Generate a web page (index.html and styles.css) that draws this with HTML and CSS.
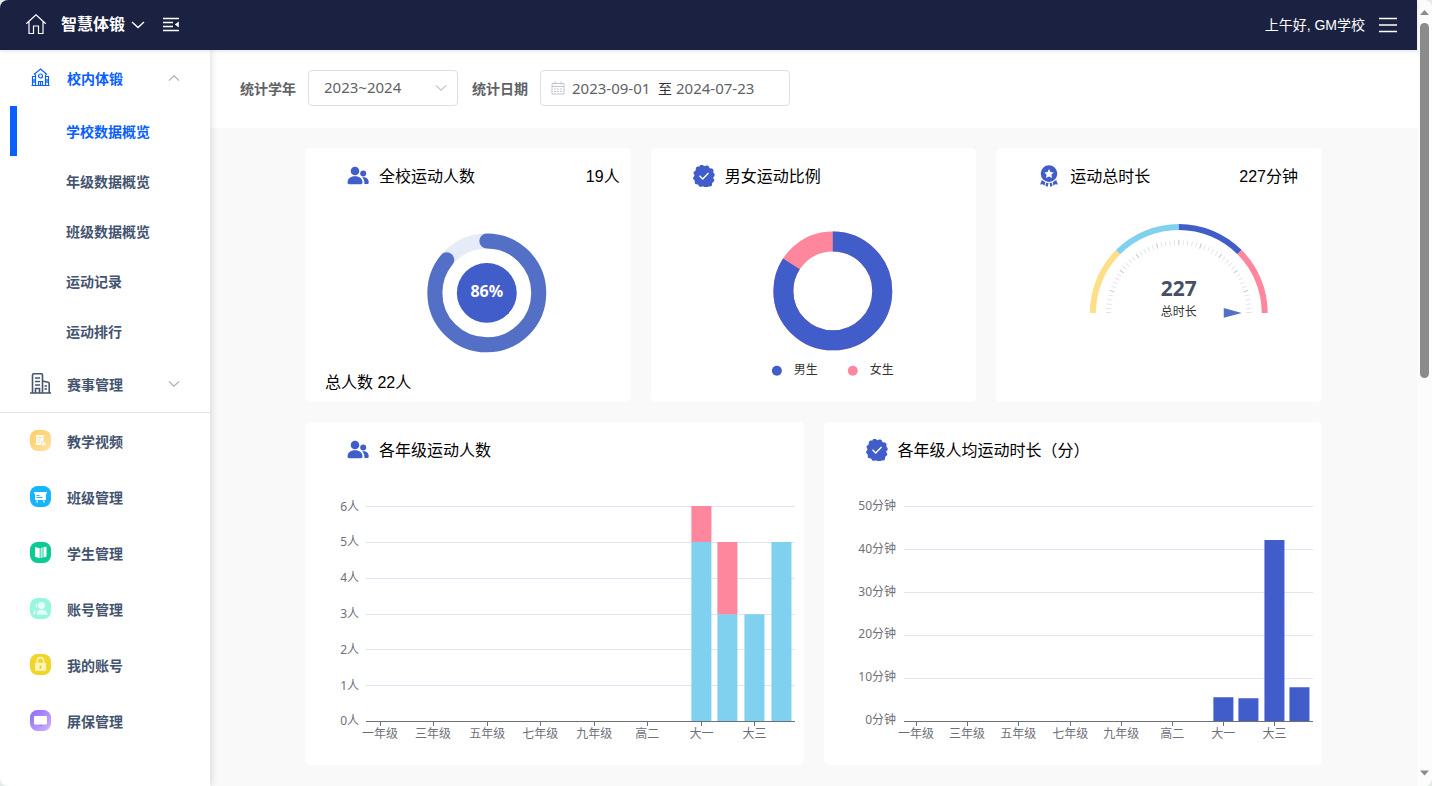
FILE: index.html
```html
<!DOCTYPE html>
<html lang="zh-CN">
<head>
<meta charset="utf-8">
<meta name="viewport" content="width=device-width, initial-scale=1">
<title>智慧体锻</title>
<link rel="stylesheet" href="styles.css">
</head>
<body>
<svg class="defs" aria-hidden="true">
  <symbol id="i-users" viewBox="0 0 22 22">
    <circle cx="8" cy="6" r="4.3"/><path d="M.5 17.5c0-4 3-6.3 7.500-6.300s7.500 2.300 7.500 6.300c0 1.200-.7 1.700-1.700 1.700H2.200c-1 0-1.700-.5-1.700-1.700z"/>
    <circle cx="16.200" cy="8.400" r="3"/><path d="M15.200 12.400c4-.6 6.500 1.600 6.500 4.800 0 1.200-.6 1.900-1.700 1.900h-2.600c.3-2.800-.5-5-2.200-6.700z"/>
  </symbol>
  <symbol id="i-badge" viewBox="0 0 22 22">
    <path d="M11 1.300 13.500.5q1.500-.4 2.300 1l.8 1.700 2.400.4q1.400.4 1.500 1.900l-.2 2 1.200 1.600q.6 1.300-.4 2.300l-1 1.400 1 1.600q.7 1.300-.5 2.300l-1.500 1.200-.1 2q-.3 1.500-1.900 1.600l-1.700-.1-1.200 1.100q-1 1-2.300.3L11 22l-.9-.8-2 .6q-1.400.3-2.200-.9l-.8-1.500-1.900-.1q-1.500-.3-1.500-1.900l.1-1.700-1.300-1.400q-.9-1.200 0-2.300l1.100-1.500-.9-1.800q-.5-1.400.6-2.300l1.400-1 .1-2q.2-1.400 1.600-1.800l2-.1.9-1.400q.8-1.200 2.200-.8z"/>
    <path d="m6.500 10.800 3.200 3.100 5.800-5.800" fill="none" stroke="#fff" stroke-width="1.400"/>
  </symbol>
  <symbol id="i-medal" viewBox="0 0 22 22">
    <path fill-rule="evenodd" d="M11 .3a8.300 8.300 0 1 1 0 16.600A8.300 8.300 0 0 1 11 .3zm0 3.600L9.500 7l-3.200.4 2.300 2.300-.6 3.300 3-1.600 3 1.600-.6-3.300 2.300-2.300-3.200-.4z"/>
    <path d="m3.800 15 3.500 2.300-.7 3.100-2-1.100-2.500.2zM8.300 17.700l2.200.4-.9 3.800-2.300-1.500zM18.200 15l-3.500 2.300.7 3.100 2-1.100 2.500.2zM13.700 17.700l-2.200.4.9 3.800 2.300-1.500z"/>
  </symbol>
  <symbol id="i-down" viewBox="0 0 14 14"><path d="M1 4 7 9.500 13 4" fill="none" stroke="currentColor" stroke-width="1.400"/></symbol>
  <linearGradient id="g-yellow" x1="0" y1="0" x2="1" y2="1"><stop stop-color="#ffcc62"/><stop offset="1" stop-color="#ffe3a6"/></linearGradient>
  <linearGradient id="g-purple" x1="0" y1="0" x2="1" y2="1"><stop stop-color="#8c66fa"/><stop offset="1" stop-color="#d2b5fb"/></linearGradient>
</svg>

<div class="window">
  <div class="app">
    <header class="topbar">
      <a class="home" href="#" aria-label="首页">
        <svg width="22" height="22" viewBox="0 0 22 22" fill="none" stroke="#fff" stroke-width="1.200"><path d="M1.300 9.800 11 .8l9.700 9M4 7.500v12h4.500V12h5v7.500H18v-12"/></svg>
      </a>
      <button class="brand" type="button">智慧体锻<svg class="brand-arrow" width="14" height="14"><use href="#i-down"/></svg></button>
      <button class="fold" type="button" aria-label="收起菜单">
        <svg width="18" height="16" viewBox="0 0 18 16" fill="none" stroke="#fff" stroke-width="1.400"><path d="M1 1.500h16M1 5.500h10M1 9.500h10M1 13.500h16"/><path d="M16.800 4.500v6l-4-3z" fill="#fff" stroke="none"/></svg>
      </button>
      <span class="greeting">上午好, GM学校</span>
      <button class="more" type="button" aria-label="更多">
        <svg width="18" height="16" viewBox="0 0 18 16" stroke="#fff" stroke-width="1.500"><path d="M0 1.500h18M0 8h18M0 14.500h18"/></svg>
      </button>
    </header>

    <div class="body">
      <nav class="sidebar">
        <a class="item open" href="#">
          <svg class="icon" viewBox="0 0 21 21" fill="none" stroke="currentColor" stroke-width="1.200"><path d="M1.500 18.500h18M2.500 18.500V9.500h3M18.500 18.500V9.500h-3M5.500 18.500v-11M15.500 18.500v-11M4 7.500l6.500-5.500L17 7.500M8.500 18.500v-4h4v4M10.500 14.500v4M4 12v4M17 12v4"/><circle cx="10.500" cy="9" r="2"/></svg>
          <span>校内体锻</span><svg class="arrow up" width="12" height="12"><use href="#i-down"/></svg>
        </a>
        <a class="sub active" href="#">学校数据概览</a>
        <a class="sub" href="#">年级数据概览</a>
        <a class="sub" href="#">班级数据概览</a>
        <a class="sub" href="#">运动记录</a>
        <a class="sub" href="#">运动排行</a>
        <a class="item divided" href="#">
          <svg class="icon" viewBox="0 0 21 21" fill="none" stroke="currentColor" stroke-width="1.600"><path d="M0 20h21M2.500 20V2Q2.500.8 3.700.8h7.600Q12.500.8 12.500 2v18M12.500 8l5.500 1.300q1.200.3 1.200 1.500V20M5 5h5M5 8.500h5M5 12h5M5.500 20v-4.500h4V20M14.500 13h2.500M14.500 16h2.500"/></svg>
          <span>赛事管理</span><svg class="arrow" width="12" height="12"><use href="#i-down"/></svg>
        </a>
        <a class="item" href="#">
          <svg class="icon" viewBox="0 0 21 21"><rect width="21" height="21" rx="7.500" fill="url(#g-yellow)"/><path d="M6 5h7.500v6H11v4H6z" fill="#fff"/><path d="M7.500 7.500h4M7.500 10h3M7.500 12.500h2" stroke="#ffd683"/><path d="M11.500 11.500h2.200l.8 1h1v3h-4z" fill="#fff8e5"/></svg>
          <span>教学视频</span></a>
        <a class="item" href="#">
          <svg class="icon" viewBox="0 0 21 21"><rect width="21" height="21" rx="7.500" fill="#18b5ff"/><path d="M4 6h13v1.500h-1V14H5V7.500H4z" fill="#fff"/><path d="M7.500 14.500 6.800 16.500M13.500 14.500l.7 2" stroke="#fff" stroke-width="1.300"/><path d="M6.500 9.500h3M6.500 11.500h6" stroke="#18b5ff"/></svg>
          <span>班级管理</span></a>
        <a class="item" href="#">
          <svg class="icon" viewBox="0 0 21 21"><rect width="21" height="21" rx="7.500" fill="#0bcb93"/><path d="M5 5l4.700 1.300v10L5 14.800zM13.500 5l3-.2v9.700l-3 1z" fill="#fff"/><path d="m10.500 6.300 2.200-1v10.200l-2.200.8z" fill="#b4f3df"/></svg>
          <span>学生管理</span></a>
        <a class="item" href="#">
          <svg class="icon" viewBox="0 0 21 21"><rect width="21" height="21" rx="7.500" fill="#98f5df"/><g fill="#e4fff8"><circle cx="11.500" cy="7.500" r="3.600"/><path d="M6.500 16.800c0-3 1.500-5 5-5s6 2 6 5zM7 5.500c-2 .8-2 4 0 5zM3.200 16.500c0-2.500.6-4 2.800-4.500-.8 1.500-1 3-1 4.500z"/></g></svg>
          <span>账号管理</span></a>
        <a class="item" href="#">
          <svg class="icon" viewBox="0 0 21 21"><rect width="21" height="21" rx="7.500" fill="#f1d528"/><path d="M7.300 9V6.800a3.200 3.200 0 0 1 6.400 0V9" fill="none" stroke="#fdf4bd" stroke-width="1.500"/><rect x="5" y="8.800" width="11" height="8" rx="1" fill="#fdf4bd"/><path d="M10.500 11.500v3" stroke="#ecca17" stroke-width="1.600"/></svg>
          <span>我的账号</span></a>
        <a class="item" href="#">
          <svg class="icon" viewBox="0 0 21 21"><rect width="21" height="21" rx="7.500" fill="url(#g-purple)"/><rect x="4" y="6" width="13" height="8.500" rx="1" fill="#fff"/><path d="M9 15.500h3" stroke="#9c78ee"/></svg>
          <span>屏保管理</span></a>
      </nav>

      <main class="main">
        <form class="filters">
          <label for="year">统计学年</label>
          <div class="select">
            <select id="year"><option>2023~2024</option></select>
            <svg width="12" height="12"><use href="#i-down"/></svg>
          </div>
          <label for="from">统计日期</label>
          <div class="range">
            <svg width="14" height="14" viewBox="0 0 14 14" fill="none" stroke="#c0c4cc"><path d="M1 2.500h12v10.500H1zM1 5.500h12M4 .5v3M10 .5v3M3 8h2M6 8h2M9 8h2M3 10.500h2M6 10.500h2M9 10.500h2"/></svg>
            <input id="from" type="text" value="2023-09-01">
            <span>至</span>
            <input type="text" value="2024-07-23" aria-label="结束日期">
          </div>
        </form>

        <div class="content">
          <section class="row three">
            <article class="card">
              <header><svg class="mark"><use href="#i-users"/></svg><h2>全校运动人数</h2><span class="value">19人</span></header>
              <svg class="chart" viewBox="0 56 326 164" preserveAspectRatio="xMidYMin meet">
                <g fill="none" stroke-width="15"><circle cx="182" cy="145" r="52" stroke="#e5ebf7"/><circle cx="182" cy="145" r="52" stroke="#5470c6" stroke-linecap="round" pathLength="100" stroke-dasharray="86 100" transform="rotate(-90 182 145)"/></g>
                <circle cx="182" cy="145" r="30" fill="#415dc9"/>
                <text class="percent" x="182" y="149">86%</text>
              </svg>
              <p class="total">总人数 22人</p>
            </article>
            <article class="card">
              <header><svg class="mark"><use href="#i-badge"/></svg><h2>男女运动比例</h2></header>
              <svg class="chart" viewBox="0 56 326 180" preserveAspectRatio="xMidYMin meet">
                <g fill="none" stroke-width="20"><circle cx="182" cy="143" r="49.500" stroke="#ff879d"/><circle cx="182" cy="143" r="49.500" stroke="#415dc9" pathLength="100" stroke-dasharray="84.200 100" transform="rotate(-90 182 143)"/></g>
                <circle cx="126" cy="223" r="5" fill="#415dc9"/><text class="legend" x="143" y="226">男生</text>
                <circle cx="202" cy="223" r="5" fill="#ff879d"/><text class="legend" x="219" y="226">女生</text>
              </svg>
            </article>
            <article class="card">
              <header><svg class="mark"><use href="#i-medal"/></svg><h2>运动总时长</h2><span class="value inset">227分钟</span></header>
              <svg class="chart" viewBox="0 56 326 180" preserveAspectRatio="xMidYMin meet">
                <g transform="translate(183 165)" fill="none">
                  <g stroke-width="6"><path d="M-86 0A86 86 0 0 1-60.800-60.800" stroke="#ffde88"/><path d="M-60.800-60.800A86 86 0 0 1 0-86" stroke="#7fd1ef"/><path d="M0-86A86 86 0 0 1 60.800-60.800" stroke="#415dc9"/><path d="M60.800-60.800A86 86 0 0 1 86 0" stroke="#ff879d"/></g>
                  <path d="M-70.500 0A70.500 70.500 0 0 1 70.500 0" stroke="#e2e2e2" stroke-width="5" pathLength="500" stroke-dasharray="2 8" stroke-dashoffset="1"/>
                  <path d="M-70.500 0A70.500 70.500 0 0 1 70.500 0" stroke="#c8c8c8" stroke-width="5" pathLength="500" stroke-dasharray="2 48" stroke-dashoffset="1"/>
                  <path d="M45-5 63 0 45 5z" fill="#5470c6"/>
                </g>
                <text class="minutes" x="183" y="148">227</text>
                <text class="legend middle" x="183" y="168">总时长</text>
              </svg>
            </article>
          </section>

          <section class="row two">
            <article class="card">
              <header><svg class="mark"><use href="#i-users"/></svg><h2>各年级运动人数</h2></header>
              <svg class="chart" viewBox="0 56 498 287" preserveAspectRatio="xMinYMin meet">
                <path class="grid" d="M61 84.500h429M61 120.500h429M61 156.500h429M61 192.500h429M61 227.500h429M61 263.500h429"/>
                <g fill="#7fd1ef"><path d="M386 120h20v179h-20zM412 192h20v107h-20zM439 192h20v107h-20zM466 120h20v179h-20z"/></g>
                <path fill="#ff879d" d="M386 84h20v36h-20zM412 120h20v72h-20z"/>
                <path class="axis" d="M61 299.500h429M75.500 299v5M128.500 299v5M182.500 299v5M235.500 299v5M289.500 299v5M342.500 299v5M396.500 299v5M449.500 299v5"/>
                <g class="ylabel"><text x="54" y="89">6人</text><text x="54" y="124">5人</text><text x="54" y="160">4人</text><text x="54" y="196">3人</text><text x="54" y="232">2人</text><text x="54" y="268">1人</text><text x="54" y="303">0人</text></g>
                <g class="xlabel"><text x="75" y="316">一年级</text><text x="128" y="316">三年级</text><text x="182" y="316">五年级</text><text x="235" y="316">七年级</text><text x="289" y="316">九年级</text><text x="342" y="316">高二</text><text x="396" y="316">大一</text><text x="449" y="316">大三</text></g>
              </svg>
            </article>
            <article class="card">
              <header><svg class="mark"><use href="#i-badge"/></svg><h2>各年级人均运动时长（分）</h2></header>
              <svg class="chart" viewBox="1 56 498 287" preserveAspectRatio="xMinYMin meet">
                <path class="grid" d="M81 84.500h409M81 127.500h409M81 170.500h409M81 213.500h409M81 256.500h409"/>
                <path fill="#415dc9" d="M390 275h20v24h-20zM415 276h20v23h-20zM441 118h20v181h-20zM466 265h20v34h-20z"/>
                <path class="axis" d="M81 299.500h409M93.500 299v5M144.500 299v5M195.500 299v5M247.500 299v5M298.500 299v5M349.500 299v5M400.500 299v5M451.500 299v5"/>
                <g class="ylabel"><text x="73" y="88">50分钟</text><text x="73" y="131">40分钟</text><text x="73" y="174">30分钟</text><text x="73" y="216">20分钟</text><text x="73" y="259">10分钟</text><text x="73" y="302">0分钟</text></g>
                <g class="xlabel"><text x="93" y="316">一年级</text><text x="144" y="316">三年级</text><text x="195" y="316">五年级</text><text x="247" y="316">七年级</text><text x="298" y="316">九年级</text><text x="349" y="316">高二</text><text x="400" y="316">大一</text><text x="451" y="316">大三</text></g>
              </svg>
            </article>
          </section>
        </div>
      </main>
    </div>
  </div>

  <div class="scrollbar" aria-hidden="true">
    <svg width="9" height="6" viewBox="0 0 9 6"><path d="M4.500 0 9 5H0z"/></svg>
    <div class="track"><div class="thumb"></div></div>
    <svg width="9" height="6" viewBox="0 0 9 6"><path d="M4.500 5.500 9 .5H0z"/></svg>
  </div>
</div>
</body>
</html>
```
FILE: styles.css
```css
* { box-sizing: border-box; }

html { background: #e6ebe8; }

body {
  margin: 0;
  font-family: "Liberation Sans", "Noto Sans CJK SC", sans-serif;
  font-size: 14px;
  color: #000;
}

a { color: inherit; text-decoration: none; }

button {
  display: flex;
  align-items: center;
  padding: 0;
  border: 0;
  background: none;
  color: inherit;
  font: inherit;
}

.defs { position: absolute; width: 0; height: 0; }

.window {
  display: flex;
  height: 100vh;
  overflow: hidden;
  border-radius: 8px;
  background: #f9f9f9;
}

.app { flex: 1; min-width: 0; display: flex; flex-direction: column; }

/* Top bar */
.topbar {
  position: relative;
  z-index: 3;
  display: flex;
  flex: none;
  align-items: center;
  height: 50px;
  padding: 0 20px 0 25px;
  background: #1b2140;
  color: #fff;
  box-shadow: 0 1px 4px rgba(0, 21, 41, 0.12);
}

.home { display: flex; margin-right: 14px; }
.brand { gap: 6px; font-size: 16px; font-weight: 700; line-height: 24px; }
.fold { margin-left: 17px; }
.greeting { margin-left: auto; line-height: 20px; }
.more { margin-left: 14px; }

/* Sidebar */
.body { display: flex; flex: 1; min-height: 0; }

.sidebar {
  position: relative;
  z-index: 2;
  flex: none;
  width: 210px;
  background: #fff;
  color: #44546f;
  font-weight: 700;
  box-shadow: 2px 0 6px rgba(0, 21, 21, 0.12);
}

.item {
  display: flex;
  align-items: center;
  height: 56px;
  padding: 0 30px;
  line-height: 20px;
}

.item span { padding-top: 2px; }
.item.open, .sub.active { color: #0960ff; }
.item.divided { height: 57px; border-bottom: 1px solid #e2e4e6; }
.icon { width: 21px; height: 21px; margin: 0 16px 1px 0; }
.arrow { margin-left: auto; margin-bottom: 1px; color: #a6adb8; }
.arrow.up { transform: rotate(180deg); }

.sub {
  display: flex;
  align-items: center;
  height: 50px;
  margin-left: 10px;
  padding-left: 49px;
  border-left: 7px solid transparent;
}

.sub.active { border-left-color: #0960ff; }

/* Filters */
.main { flex: 1; min-width: 0; overflow: hidden; }

.filters {
  display: flex;
  align-items: center;
  padding: 20px 30px 22px;
  background: #fff;
  color: #606266;
}

.filters label { margin-right: 12px; font-weight: 700; }

.select { display: grid; align-items: center; width: 150px; margin-right: 14px; }
.select > * { grid-area: 1 / 1; }
.select svg { justify-self: end; margin-right: 11px; color: #c0c4cc; pointer-events: none; }

.select select, .range {
  height: 36px;
  border: 1px solid #dcdfe6;
  border-radius: 4px;
  background: #fff;
}

.select select, .range input {
  appearance: none;
  color: #606266;
  font-family: "Noto Sans", "Noto Sans CJK SC", sans-serif;
  font-size: 15px;
}

.select select { width: 100%; padding: 0 15px 2px; }

.range { display: flex; align-items: center; width: 250px; padding: 0 10px; color: #303133; }
.range input { width: 93px; padding: 0 0 0 7px; border: 0; background: none; }
.range input:last-child { padding-left: 4px; }
.range span { width: 14px; }

/* Cards */
.content { display: grid; gap: 20px; padding: 20px 95px; }
.row { display: grid; gap: 20px; }
.three { grid-template-columns: repeat(3, minmax(0, 1fr)); }
.two { grid-template-columns: repeat(2, minmax(0, 1fr)); }
.card { border-radius: 5px; background: #fff; }
.three .card { min-height: 254px; }

.card header {
  display: flex;
  align-items: center;
  height: 56px;
  padding: 0 11px 0 42px;
  font-size: 16px;
  line-height: 24px;
}

.card h2, .value { margin: 0; padding-top: 2px; font-size: 16px; font-weight: 400; }
.mark { width: 22px; height: 22px; margin-right: 10px; fill: #415dc9; }
.card .value { margin-left: auto; }
.card .inset { margin-right: 13px; }
.chart { display: block; width: 100%; height: auto; }
.total { margin: 0; padding: 3px 20px 7px; font-size: 16px; line-height: 24px; }

.chart text { font-family: "Noto Sans", "Noto Sans CJK SC", sans-serif; font-size: 12px; }
.chart .percent { fill: #fff; font-size: 16px; font-weight: 700; text-anchor: middle; }
.chart .minutes { fill: #464f66; font-size: 21px; font-weight: 700; text-anchor: middle; }
.legend { fill: #333; }
.legend.middle { text-anchor: middle; }
.ylabel { fill: #6e7079; text-anchor: end; }
.xlabel { fill: #6e7079; text-anchor: middle; }
.grid { stroke: #e0e6f1; shape-rendering: crispEdges; }
.axis { fill: none; stroke: #6e7079; shape-rendering: crispEdges; }

/* Scroll bar */
.scrollbar {
  display: flex;
  flex: none;
  flex-direction: column;
  align-items: center;
  width: 15px;
  padding: 10px 0;
  background: #fcfcfc;
  fill: #8b8b8b;
}

.track { flex: 1; padding: 7px 0; }
.thumb { width: 9px; height: 48%; border-radius: 5px; background: #8b8b8b; }
```
